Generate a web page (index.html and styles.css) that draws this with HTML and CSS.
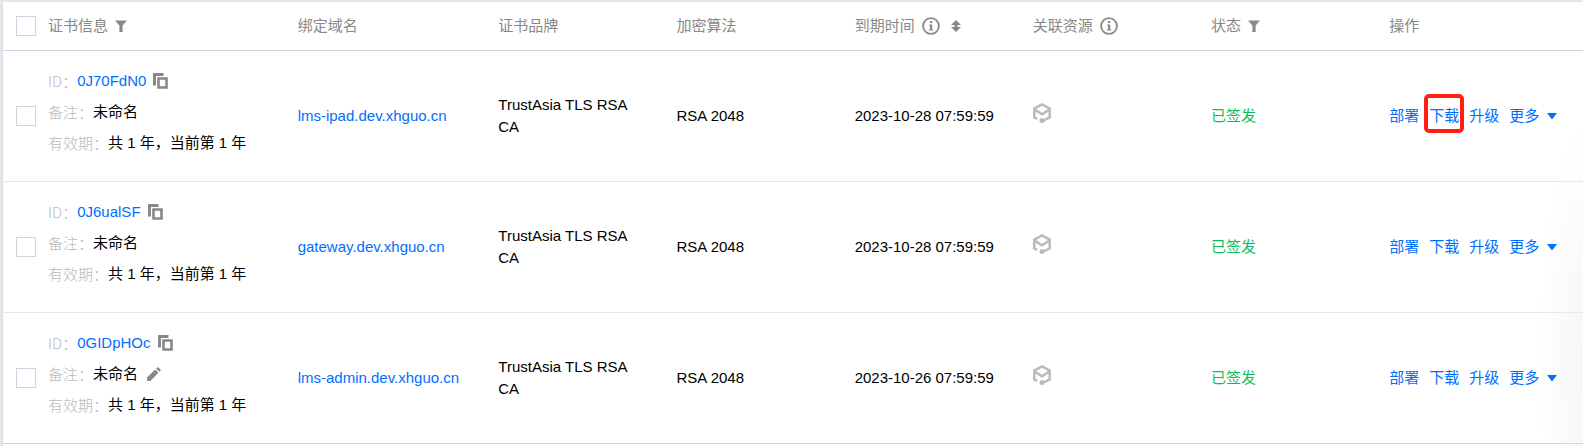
FILE: index.html
```
<!DOCTYPE html>
<html lang="zh-CN">
<head>
<meta charset="utf-8">
<title>证书列表</title>
<link rel="stylesheet" href="styles.css">
</head>
<body>
<svg class="sprite" aria-hidden="true">
  <symbol id="filter" viewBox="0 0 12 12"><path d="M0 0.5h12L7.6 5.4V12H4.4V5.4z" fill="currentColor"/></symbol>
  <symbol id="info" viewBox="0 0 18 18"><circle cx="9" cy="9" r="7.9" fill="none" stroke="currentColor" stroke-width="1.8"/><path d="M8 4h2.2v2H8zM7 7.4h3.2v5H11.4V13.6H6.8v-1.2H8V8.6H7z" fill="currentColor"/></symbol>
  <symbol id="sort" viewBox="0 0 10 12"><path d="M5 0l5 5H6.5v2H10L5 12 0 7h3.5V5H0z" fill="currentColor"/></symbol>
  <symbol id="copy" viewBox="0 0 15 16"><path d="M1.5 12.5V1.5H10.5" fill="none" stroke="currentColor" stroke-width="3"/><path d="M5.5 5.5h8v9h-8z" fill="none" stroke="currentColor" stroke-width="2.6"/></symbol>
  <symbol id="edit" viewBox="0 0 14 14"><path d="M0 14v-3.4L8.2 2.6l3.2 3.2L3.4 14zM9.2 1.8L11 0l3 3-1.8 1.8z" fill="currentColor"/></symbol>
  <symbol id="cube" viewBox="0 0 18 20"><path d="M4.2 16L1.3 14.4V5.6L9 1.4l7.7 4.2v8.8L9.6 18M1.8 6.6L9 11.2l7.2-4.6" fill="none" stroke="currentColor" stroke-width="2.5"/><circle cx="9" cy="17.4" r="2.5" fill="currentColor"/></symbol>
  <symbol id="caret" viewBox="0 0 10 7"><path d="M0 0h10L5 6.5z" fill="currentColor"/></symbol>
</svg>
<main class="panel">
<table class="certs">
  <colgroup><col class="c-check"><col class="c-info"><col class="c-domain"><col><col><col><col><col><col class="c-ops"></colgroup>
  <thead>
    <tr>
      <th class="check"><input type="checkbox" class="box" aria-label="全选"></th>
      <th><span class="head">证书信息<button class="icon-btn" aria-label="筛选证书"><svg class="i-filter"><use href="#filter"/></svg></button></span></th>
      <th>绑定域名</th>
      <th>证书品牌</th>
      <th>加密算法</th>
      <th><span class="head">到期时间<svg class="i-info"><use href="#info"/></svg><button class="icon-btn sort" aria-label="排序"><svg class="i-sort"><use href="#sort"/></svg></button></span></th>
      <th><span class="head">关联资源<svg class="i-info"><use href="#info"/></svg></span></th>
      <th><span class="head">状态<button class="icon-btn" aria-label="筛选状态"><svg class="i-filter"><use href="#filter"/></svg></button></span></th>
      <th>操作</th>
    </tr>
  </thead>
  <tbody>
    <tr>
      <td class="check"><input type="checkbox" class="box" aria-label="选择 0J70FdN0"></td>
      <td class="info">
        <div class="line"><span class="label">ID：</span><a href="#">0J70FdN0</a><button class="icon-btn copy" aria-label="复制"><svg class="i-copy"><use href="#copy"/></svg></button></div>
        <div class="line"><span class="label">备注：</span>未命名</div>
        <div class="line"><span class="label">有效期：</span>共 1 年，当前第 1 年</div>
      </td>
      <td><a href="#">lms-ipad.dev.xhguo.cn</a></td>
      <td class="brand">TrustAsia TLS RSA CA</td>
      <td>RSA 2048</td>
      <td>2023-10-28 07:59:59</td>
      <td class="resource"><svg class="i-cube"><use href="#cube"/></svg></td>
      <td class="ok">已签发</td>
      <td><div class="ops"><a href="#">部署</a><a href="#" class="marked">下载</a><a href="#">升级</a><button class="more">更多<svg class="i-caret"><use href="#caret"/></svg></button></div></td>
    </tr>
    <tr>
      <td class="check"><input type="checkbox" class="box" aria-label="选择 0J6ualSF"></td>
      <td class="info">
        <div class="line"><span class="label">ID：</span><a href="#">0J6ualSF</a><button class="icon-btn copy" aria-label="复制"><svg class="i-copy"><use href="#copy"/></svg></button></div>
        <div class="line"><span class="label">备注：</span>未命名</div>
        <div class="line"><span class="label">有效期：</span>共 1 年，当前第 1 年</div>
      </td>
      <td><a href="#">gateway.dev.xhguo.cn</a></td>
      <td class="brand">TrustAsia TLS RSA CA</td>
      <td>RSA 2048</td>
      <td>2023-10-28 07:59:59</td>
      <td class="resource"><svg class="i-cube"><use href="#cube"/></svg></td>
      <td class="ok">已签发</td>
      <td><div class="ops"><a href="#">部署</a><a href="#">下载</a><a href="#">升级</a><button class="more">更多<svg class="i-caret"><use href="#caret"/></svg></button></div></td>
    </tr>
    <tr>
      <td class="check"><input type="checkbox" class="box" aria-label="选择 0GIDpHOc"></td>
      <td class="info">
        <div class="line"><span class="label">ID：</span><a href="#">0GIDpHOc</a><button class="icon-btn copy" aria-label="复制"><svg class="i-copy"><use href="#copy"/></svg></button></div>
        <div class="line"><span class="label">备注：</span>未命名<button class="icon-btn edit" aria-label="编辑备注"><svg class="i-edit"><use href="#edit"/></svg></button></div>
        <div class="line"><span class="label">有效期：</span>共 1 年，当前第 1 年</div>
      </td>
      <td><a href="#">lms-admin.dev.xhguo.cn</a></td>
      <td class="brand">TrustAsia TLS RSA CA</td>
      <td>RSA 2048</td>
      <td>2023-10-26 07:59:59</td>
      <td class="resource"><svg class="i-cube"><use href="#cube"/></svg></td>
      <td class="ok">已签发</td>
      <td><div class="ops"><a href="#">部署</a><a href="#">下载</a><a href="#">升级</a><button class="more">更多<svg class="i-caret"><use href="#caret"/></svg></button></div></td>
    </tr>
  </tbody>
</table>
</main>
</body>
</html>
```
FILE: styles.css
```
* { box-sizing: border-box; }
body {
  margin: 0;
  padding: 2px 0 0 3px;
  background: #e9eaef;
  color: #000;
  font: 15px/22px "Liberation Sans", "Noto Sans CJK SC", sans-serif;
}
svg { display: block; flex: none; }
.sprite { position: absolute; width: 0; height: 0; }
a { color: #006eff; text-decoration: none; }
.panel {
  padding-bottom: 2px;
  background: radial-gradient(ellipse 45px 240px at 100% 360px, #f5f6f8, #fff) #fff;
  box-shadow: 0 1px 3px rgba(54, 58, 80, .2);
}
.certs { width: 100%; table-layout: fixed; border-collapse: separate; border-spacing: 0; }
.c-check { width: 35px; }
.c-info { width: 15.8%; }
.c-domain { width: 12.7%; }
.c-ops { width: 12.9%; }
th {
  height: 49px;
  padding: 0 10px;
  border-bottom: 1px solid #cfd5de;
  color: #888;
  font-weight: 400;
  text-align: left;
}
td { padding: 0 10px; border-bottom: 1px solid #e5e8ed; vertical-align: middle; }
tbody tr:last-child td { border-bottom-color: #cfd5de; }
.check { padding: 0 0 0 13px; }
.box {
  display: block;
  width: 20px;
  height: 20px;
  margin: 0;
  appearance: none;
  border: 1px solid #cfd5de;
  background: #fff;
}
.head { display: flex; align-items: center; gap: 7px; }
button { padding: 0; border: 0; background: none; font: inherit; cursor: pointer; }
.icon-btn { color: #888; }
.sort { margin-left: 4px; }
.info { padding: 14px 10px 23px; }
.line { display: flex; align-items: center; line-height: 31px; }
.label { color: #bbb; font-family: "Noto Sans CJK SC", sans-serif; font-weight: 300; }
.copy { margin-left: 7px; }
.edit { margin-left: 9px; }
.brand { padding-right: 32px; }
.resource { padding-bottom: 6px; }
.ok { color: #0abf5b; }
.ops { display: flex; align-items: center; gap: 10px; }
.more { display: flex; align-items: center; gap: 8px; color: #006eff; }
.marked { position: relative; }
.marked::after {
  content: "";
  position: absolute;
  inset: -11px -5px -6px;
  border: 4px solid #ff1e10;
  border-radius: 5px;
}
.i-filter { width: 12px; height: 12px; }
.i-info { width: 18px; height: 18px; }
.i-sort { width: 10px; height: 12px; }
.i-copy { width: 15px; height: 16px; }
.i-edit { width: 14px; height: 14px; }
.i-cube { width: 18px; height: 20px; color: #bbb; }
.i-caret { width: 10px; height: 7px; }
```
